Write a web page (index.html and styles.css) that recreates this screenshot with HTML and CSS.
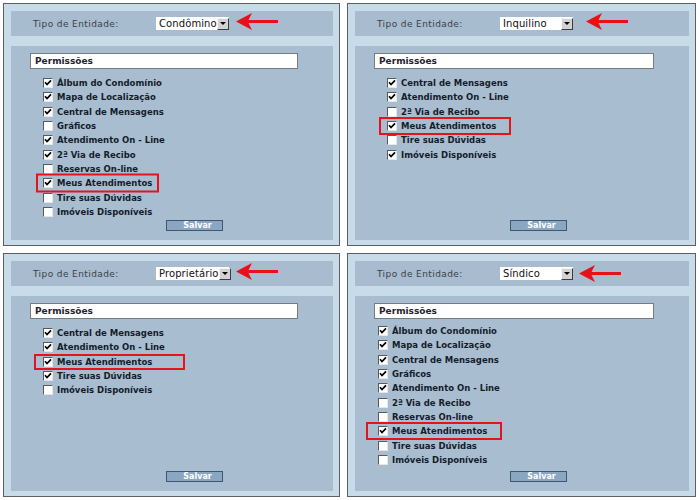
FILE: index.html
```html
<!DOCTYPE html>
<html lang="pt">
<head>
<meta charset="utf-8">
<title>Permissões por Tipo de Entidade</title>
<link rel="stylesheet" href="styles.css">
</head>
<body>
<div class="sheet">

  <section class="panel">
    <div class="band">
      <span class="label">Tipo de Entidade:</span>
      <span class="select"><span class="sel-text">Condômino</span><span class="sel-btn"></span></span>
      <svg class="arrow" viewBox="0 0 42 17"><path d="M0 8.5 L16 0 L12.5 7 L42 7 L42 10 L12.5 10 L16 17 Z"/></svg>
    </div>
    <div class="content">
      <div class="perm">Permissões</div>
      <ul class="list">
        <li class="item"><span class="cb"><svg viewBox="0 0 8 8"><path d="M1 3.3 L3 5.5 L7 1.3"/></svg></span>Álbum do Condomínio</li>
        <li class="item"><span class="cb"><svg viewBox="0 0 8 8"><path d="M1 3.3 L3 5.5 L7 1.3"/></svg></span>Mapa de Localização</li>
        <li class="item"><span class="cb"><svg viewBox="0 0 8 8"><path d="M1 3.3 L3 5.5 L7 1.3"/></svg></span>Central de Mensagens</li>
        <li class="item"><span class="cb"></span>Gráficos</li>
        <li class="item"><span class="cb"><svg viewBox="0 0 8 8"><path d="M1 3.3 L3 5.5 L7 1.3"/></svg></span>Atendimento On - Line</li>
        <li class="item"><span class="cb"><svg viewBox="0 0 8 8"><path d="M1 3.3 L3 5.5 L7 1.3"/></svg></span>2ª Via de Recibo</li>
        <li class="item"><span class="cb"></span>Reservas On-line</li>
        <li class="item"><span class="cb"><svg viewBox="0 0 8 8"><path d="M1 3.3 L3 5.5 L7 1.3"/></svg></span>Meus Atendimentos<span class="hl hl-tl"></span></li>
        <li class="item"><span class="cb"></span>Tire suas Dúvidas</li>
        <li class="item"><span class="cb"></span>Imóveis Disponíveis</li>
      </ul>
      <div class="actions"><div class="btn">Salvar</div></div>
    </div>
  </section>

  <section class="panel">
    <div class="band">
      <span class="label">Tipo de Entidade:</span>
      <span class="select"><span class="sel-text">Inquilino</span><span class="sel-btn"></span></span>
      <svg class="arrow arrow-wide" viewBox="0 0 42 17"><path d="M0 8.5 L16 0 L12.5 7 L42 7 L42 10 L12.5 10 L16 17 Z"/></svg>
    </div>
    <div class="content">
      <div class="perm">Permissões</div>
      <ul class="list">
        <li class="item"><span class="cb"><svg viewBox="0 0 8 8"><path d="M1 3.3 L3 5.5 L7 1.3"/></svg></span>Central de Mensagens</li>
        <li class="item"><span class="cb"><svg viewBox="0 0 8 8"><path d="M1 3.3 L3 5.5 L7 1.3"/></svg></span>Atendimento On - Line</li>
        <li class="item"><span class="cb"></span>2ª Via de Recibo</li>
        <li class="item"><span class="cb"><svg viewBox="0 0 8 8"><path d="M1 3.3 L3 5.5 L7 1.3"/></svg></span>Meus Atendimentos<span class="hl hl-tr"></span></li>
        <li class="item"><span class="cb"></span>Tire suas Dúvidas</li>
        <li class="item"><span class="cb"><svg viewBox="0 0 8 8"><path d="M1 3.3 L3 5.5 L7 1.3"/></svg></span>Imóveis Disponíveis</li>
      </ul>
      <div class="actions"><div class="btn">Salvar</div></div>
    </div>
  </section>

  <section class="panel">
    <div class="band">
      <span class="label">Tipo de Entidade:</span>
      <span class="select"><span class="sel-text">Proprietário</span><span class="sel-btn"></span></span>
      <svg class="arrow" viewBox="0 0 42 17"><path d="M0 8.5 L16 0 L12.5 7 L42 7 L42 10 L12.5 10 L16 17 Z"/></svg>
    </div>
    <div class="content">
      <div class="perm">Permissões</div>
      <ul class="list">
        <li class="item"><span class="cb"><svg viewBox="0 0 8 8"><path d="M1 3.3 L3 5.5 L7 1.3"/></svg></span>Central de Mensagens</li>
        <li class="item"><span class="cb"><svg viewBox="0 0 8 8"><path d="M1 3.3 L3 5.5 L7 1.3"/></svg></span>Atendimento On - Line</li>
        <li class="item"><span class="cb"><svg viewBox="0 0 8 8"><path d="M1 3.3 L3 5.5 L7 1.3"/></svg></span>Meus Atendimentos<span class="hl hl-bl"></span></li>
        <li class="item"><span class="cb"><svg viewBox="0 0 8 8"><path d="M1 3.3 L3 5.5 L7 1.3"/></svg></span>Tire suas Dúvidas</li>
        <li class="item"><span class="cb"></span>Imóveis Disponíveis</li>
      </ul>
      <div class="actions"><div class="btn">Salvar</div></div>
    </div>
  </section>

  <section class="panel">
    <div class="band">
      <span class="label">Tipo de Entidade:</span>
      <span class="select"><span class="sel-text">Síndico</span><span class="sel-btn"></span></span>
      <svg class="arrow arrow-tight" viewBox="0 0 42 17"><path d="M0 8.5 L16 0 L12.5 7 L42 7 L42 10 L12.5 10 L16 17 Z"/></svg>
    </div>
    <div class="content">
      <div class="perm">Permissões</div>
      <ul class="list list-flush">
        <li class="item"><span class="cb"><svg viewBox="0 0 8 8"><path d="M1 3.3 L3 5.5 L7 1.3"/></svg></span>Álbum do Condomínio</li>
        <li class="item"><span class="cb"><svg viewBox="0 0 8 8"><path d="M1 3.3 L3 5.5 L7 1.3"/></svg></span>Mapa de Localização</li>
        <li class="item"><span class="cb"><svg viewBox="0 0 8 8"><path d="M1 3.3 L3 5.5 L7 1.3"/></svg></span>Central de Mensagens</li>
        <li class="item"><span class="cb"><svg viewBox="0 0 8 8"><path d="M1 3.3 L3 5.5 L7 1.3"/></svg></span>Gráficos</li>
        <li class="item"><span class="cb"><svg viewBox="0 0 8 8"><path d="M1 3.3 L3 5.5 L7 1.3"/></svg></span>Atendimento On - Line</li>
        <li class="item"><span class="cb"></span>2ª Via de Recibo</li>
        <li class="item"><span class="cb"></span>Reservas On-line</li>
        <li class="item"><span class="cb"><svg viewBox="0 0 8 8"><path d="M1 3.3 L3 5.5 L7 1.3"/></svg></span>Meus Atendimentos<span class="hl hl-br"></span></li>
        <li class="item"><span class="cb"></span>Tire suas Dúvidas</li>
        <li class="item"><span class="cb"></span>Imóveis Disponíveis</li>
      </ul>
      <div class="actions"><div class="btn">Salvar</div></div>
    </div>
  </section>

</div>
</body>
</html>
```

FILE: styles.css
```css
body {
  margin: 0;
  background: #ffffff;
  font-family: "DejaVu Sans", Verdana, sans-serif;
}

.sheet {
  display: grid;
  grid-template-columns: 337px 349px;
  grid-template-rows: 243px 244px;
  column-gap: 7px;
  row-gap: 7px;
  padding: 3px 0 0 3px;
}

.panel {
  display: flex;
  flex-direction: column;
  gap: 10px;
  box-sizing: border-box;
  border: 1px solid #5c5f64;
  background: #c8dbe9;
  padding: 7px 6px 5px 7px;
}

.band {
  flex: 0 0 25px;
  height: 25px;
  background: #a8bccf;
  display: flex;
  align-items: center;
  padding-left: 22px;
}

.label {
  width: 123px;
  flex: 0 0 123px;
  font-size: 9px;
  letter-spacing: 0.4px;
  color: #3b4049;
}

.select {
  width: 73px;
  height: 13px;
  background: #ffffff;
  display: flex;
  align-items: center;
  justify-content: space-between;
  box-sizing: border-box;
}

.sel-text {
  font-size: 10px;
  letter-spacing: 0.1px;
  color: #111111;
  padding-left: 3px;
  white-space: nowrap;
}

.sel-btn {
  flex: 0 0 auto;
  width: 12px;
  height: 12px;
  box-sizing: border-box;
  background: #d2d2d2;
  border: 1px solid;
  border-color: #f4f4f4 #3c3c3c #3c3c3c #f4f4f4;
  display: flex;
  align-items: center;
  justify-content: center;
}

.sel-btn::after {
  content: "";
  border-left: 3px solid transparent;
  border-right: 3px solid transparent;
  border-top: 3px solid #000000;
}

.arrow {
  width: 42px;
  height: 17px;
  margin-left: 7px;
  margin-bottom: 4px;
  fill: #e8101a;
}

.arrow-wide {
  margin-left: 13px;
}

.arrow-tight {
  margin-left: 6px;
  margin-bottom: 0;
}

.content {
  flex: 1;
  background: #a9bdd0;
  display: flex;
  flex-direction: column;
  padding: 7px 0 9px;
  box-sizing: border-box;
}

.perm {
  margin: 0 35px 0 19px;
  height: 16px;
  box-sizing: border-box;
  border: 1px solid #767b82;
  background: #ffffff;
  font-weight: bold;
  font-size: 9px;
  line-height: 14px;
  padding-left: 4px;
  color: #1f2430;
}

.list {
  list-style: none;
  margin: 7px 0 0;
  padding: 0 0 0 32px;
}

.list-flush {
  padding-left: 23px;
  margin-top: 5px;
}

.item {
  position: relative;
  display: flex;
  align-items: center;
  gap: 4px;
  height: 14.3px;
  font-weight: bold;
  font-size: 8.5px;
  color: #141c2b;
  white-space: nowrap;
  width: max-content;
}

.cb {
  flex: 0 0 10px;
  width: 10px;
  height: 10px;
  box-sizing: border-box;
  background: #ffffff;
  border: 1px solid;
  border-color: #5a5a5a #e6e6e6 #e6e6e6 #5a5a5a;
}

.cb svg {
  display: block;
  width: 8px;
  height: 8px;
}

.cb path {
  fill: none;
  stroke: #000000;
  stroke-width: 1.7;
}

.hl {
  position: absolute;
  top: 50%;
  transform: translateY(-50%);
  box-sizing: border-box;
  border: 2px solid #e3141c;
}

.hl-tl { left: -7px; width: 123px; height: 19px; }
.hl-tr { left: -8px; width: 132px; height: 18px; }
.hl-bl { left: -9px; width: 151px; height: 16px; }
.hl-br { left: -12px; width: 136px; height: 18px; }

.actions {
  margin-top: auto;
  padding-left: 155px;
}

.btn {
  width: 57px;
  height: 11px;
  box-sizing: border-box;
  border: 1px solid #3d5876;
  background: #8aa6c1;
  color: #ffffff;
  font-weight: bold;
  font-size: 8px;
  line-height: 9px;
  text-align: center;
  padding-left: 6px;
}
```
